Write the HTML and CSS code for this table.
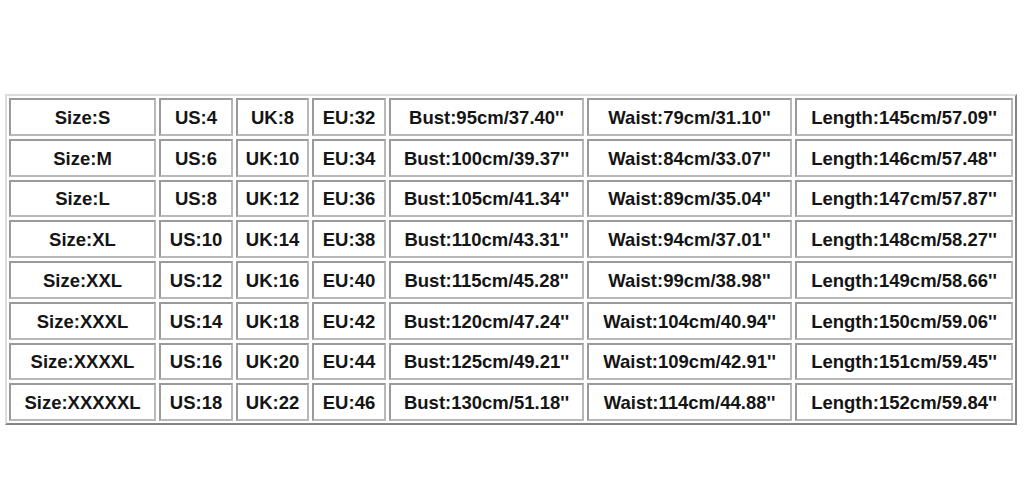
FILE: index.html
```html
<!DOCTYPE html>
<html>
<head>
<meta charset="utf-8">
<link rel="stylesheet" href="styles.css">
</head>
<body>
<div class="page">
  <div class="chart">
    <div class="cell">Size:S</div><div class="cell">US:4</div><div class="cell">UK:8</div><div class="cell">EU:32</div><div class="cell">Bust:95cm/37.40''</div><div class="cell">Waist:79cm/31.10''</div><div class="cell">Length:145cm/57.09''</div>
    <div class="cell">Size:M</div><div class="cell">US:6</div><div class="cell">UK:10</div><div class="cell">EU:34</div><div class="cell">Bust:100cm/39.37''</div><div class="cell">Waist:84cm/33.07''</div><div class="cell">Length:146cm/57.48''</div>
    <div class="cell">Size:L</div><div class="cell">US:8</div><div class="cell">UK:12</div><div class="cell">EU:36</div><div class="cell">Bust:105cm/41.34''</div><div class="cell">Waist:89cm/35.04''</div><div class="cell">Length:147cm/57.87''</div>
    <div class="cell">Size:XL</div><div class="cell">US:10</div><div class="cell">UK:14</div><div class="cell">EU:38</div><div class="cell">Bust:110cm/43.31''</div><div class="cell">Waist:94cm/37.01''</div><div class="cell">Length:148cm/58.27''</div>
    <div class="cell">Size:XXL</div><div class="cell">US:12</div><div class="cell">UK:16</div><div class="cell">EU:40</div><div class="cell">Bust:115cm/45.28''</div><div class="cell">Waist:99cm/38.98''</div><div class="cell">Length:149cm/58.66''</div>
    <div class="cell">Size:XXXL</div><div class="cell">US:14</div><div class="cell">UK:18</div><div class="cell">EU:42</div><div class="cell">Bust:120cm/47.24''</div><div class="cell">Waist:104cm/40.94''</div><div class="cell">Length:150cm/59.06''</div>
    <div class="cell">Size:XXXXL</div><div class="cell">US:16</div><div class="cell">UK:20</div><div class="cell">EU:44</div><div class="cell">Bust:125cm/49.21''</div><div class="cell">Waist:109cm/42.91''</div><div class="cell">Length:151cm/59.45''</div>
    <div class="cell">Size:XXXXXL</div><div class="cell">US:18</div><div class="cell">UK:22</div><div class="cell">EU:46</div><div class="cell">Bust:130cm/51.18''</div><div class="cell">Waist:114cm/44.88''</div><div class="cell">Length:152cm/59.84''</div>
  </div>
</div>
</body>
</html>
```

FILE: styles.css
```css
html, body {
  margin: 0;
  padding: 0;
  background: #ffffff;
}

.page {
  padding: 94px 0 0 5px;
}

.chart {
  display: grid;
  grid-template-columns: 147px 74px 73px 74px 195px 205px 218px;
  grid-auto-rows: 37.75px;
  gap: 3px;
  padding: 2px;
  width: 1004px;
  border: 2px solid;
  border-color: #dcdcdc #858585 #858585 #dcdcdc;
  font-family: "Liberation Sans", Arial, sans-serif;
  font-weight: bold;
  font-size: 18.5px;
  color: #151515;
}

.cell {
  box-sizing: border-box;
  padding-top: 2px;
  border: 2px solid;
  border-color: #9a9a9a #b8b8b8 #b8b8b8 #9a9a9a;
  display: flex;
  align-items: center;
  justify-content: center;
  white-space: nowrap;
}
```
